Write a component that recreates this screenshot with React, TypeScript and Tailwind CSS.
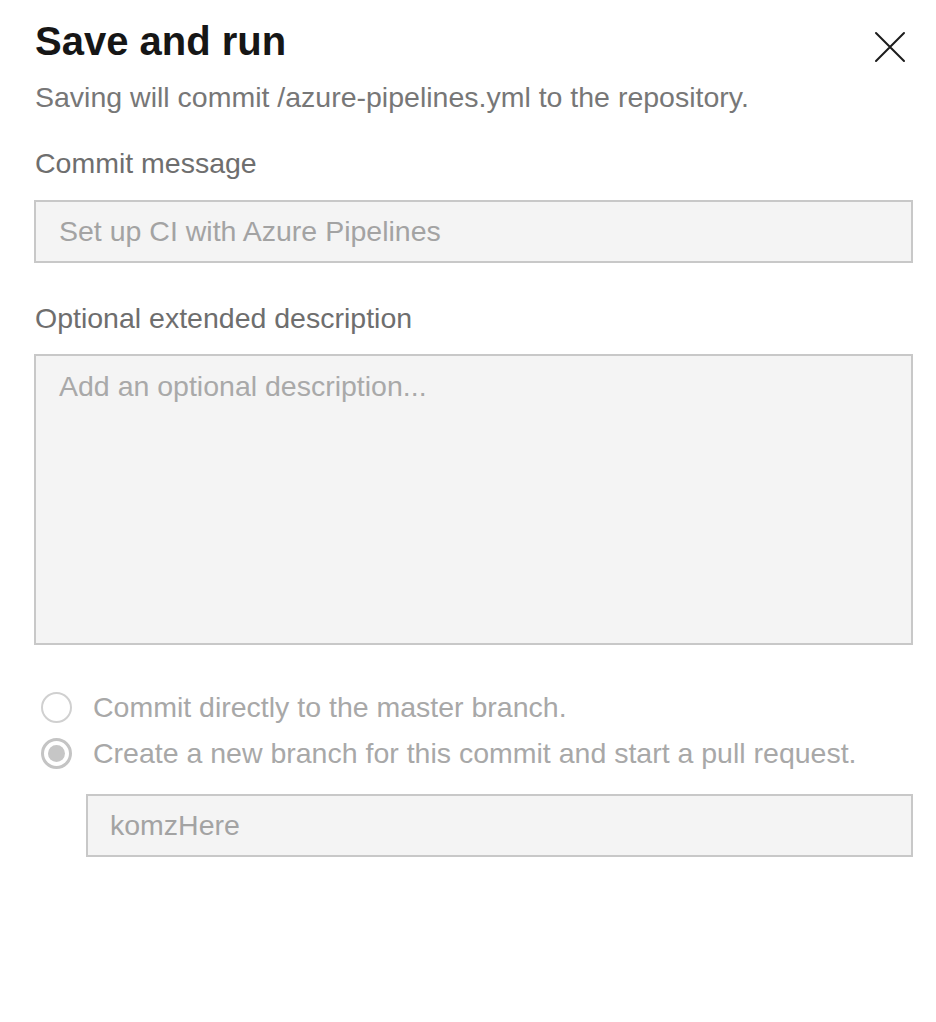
import { useState } from "react"

const font = { fontFamily: '"Liberation Sans", Arial, sans-serif' }

const Radio = ({ checked, label }: { checked?: boolean, label: string }) => (
  <label className="flex items-center h-[46px] gap-[21px] pl-[7px] cursor-default">
    {checked ? (
      <span className="w-[31px] h-[31px] shrink-0 rounded-full border-[3px] border-[#c4c4c4] bg-white flex items-center justify-center">
        <span className="w-[17px] h-[17px] rounded-full bg-[#c6c6c6]" />
      </span>
    ) : (
      <span className="w-[31px] h-[31px] shrink-0 rounded-full border-2 border-[#d0d0d0] bg-white" />
    )}
    <span className="text-[28.5px] leading-[36px] text-[#a8a8a8]">{label}</span>
  </label>
)

export default function App() {
  const [branch, setBranch] = useState("komzHere")

  return (
    <div className="w-[936px] h-[1022px] bg-white pl-[34px] pr-[23px] pt-[17px]" style={font}>
      {/* header */}
      <div className="flex items-start justify-between">
        <h1 className="text-[40px] leading-[48px] font-bold text-[#161616] pl-px">Save and run</h1>
        <button className="mt-[14px] mr-[7px] text-[#1c1c1c]" aria-label="Close">
          <svg width="32" height="32" viewBox="0 0 32 32" fill="none" stroke="currentColor" strokeWidth="2" strokeLinecap="round">
            <path d="M2 2 L30 30 M30 2 L2 30" />
          </svg>
        </button>
      </div>
      <p className="mt-[14px] text-[28.5px] leading-[36px] text-[#777777] pl-px">
        Saving will commit /azure-pipelines.yml to the repository.
      </p>

      {/* commit message */}
      <div className="mt-[30px] text-[28.5px] leading-[36px] text-[#6e6e6e] pl-px">Commit message</div>
      <input
        readOnly
        value="Set up CI with Azure Pipelines"
        className="mt-[19px] block w-full h-[63px] bg-[#f4f4f4] border-2 border-[#c8c8c8] pl-[23px] text-[28.5px] text-[#a3a3a3] outline-none"
        style={font}
      />

      {/* description */}
      <div className="mt-[37px] text-[28.5px] leading-[36px] text-[#6e6e6e] pl-px">Optional extended description</div>
      <textarea
        placeholder="Add an optional description..."
        className="mt-[18px] block w-full h-[291px] bg-[#f4f4f4] border-2 border-[#c8c8c8] pl-[23px] pt-[12px] text-[28.5px] leading-[36px] text-[#777] placeholder:text-[#a9a9a9] outline-none resize-none"
        style={font}
      />

      {/* branch options */}
      <div className="mt-[39px]">
        <Radio label="Commit directly to the master branch." />
        <Radio checked label="Create a new branch for this commit and start a pull request." />
      </div>
      <div className="pl-[52px] mt-[18px]">
        <input
          value={branch}
          onChange={e => setBranch(e.target.value)}
          className="block w-full h-[63px] bg-[#f4f4f4] border-2 border-[#c8c8c8] pl-[22px] text-[28.5px] text-[#a3a3a3] outline-none"
          style={font}
        />
      </div>
    </div>
  )
}
